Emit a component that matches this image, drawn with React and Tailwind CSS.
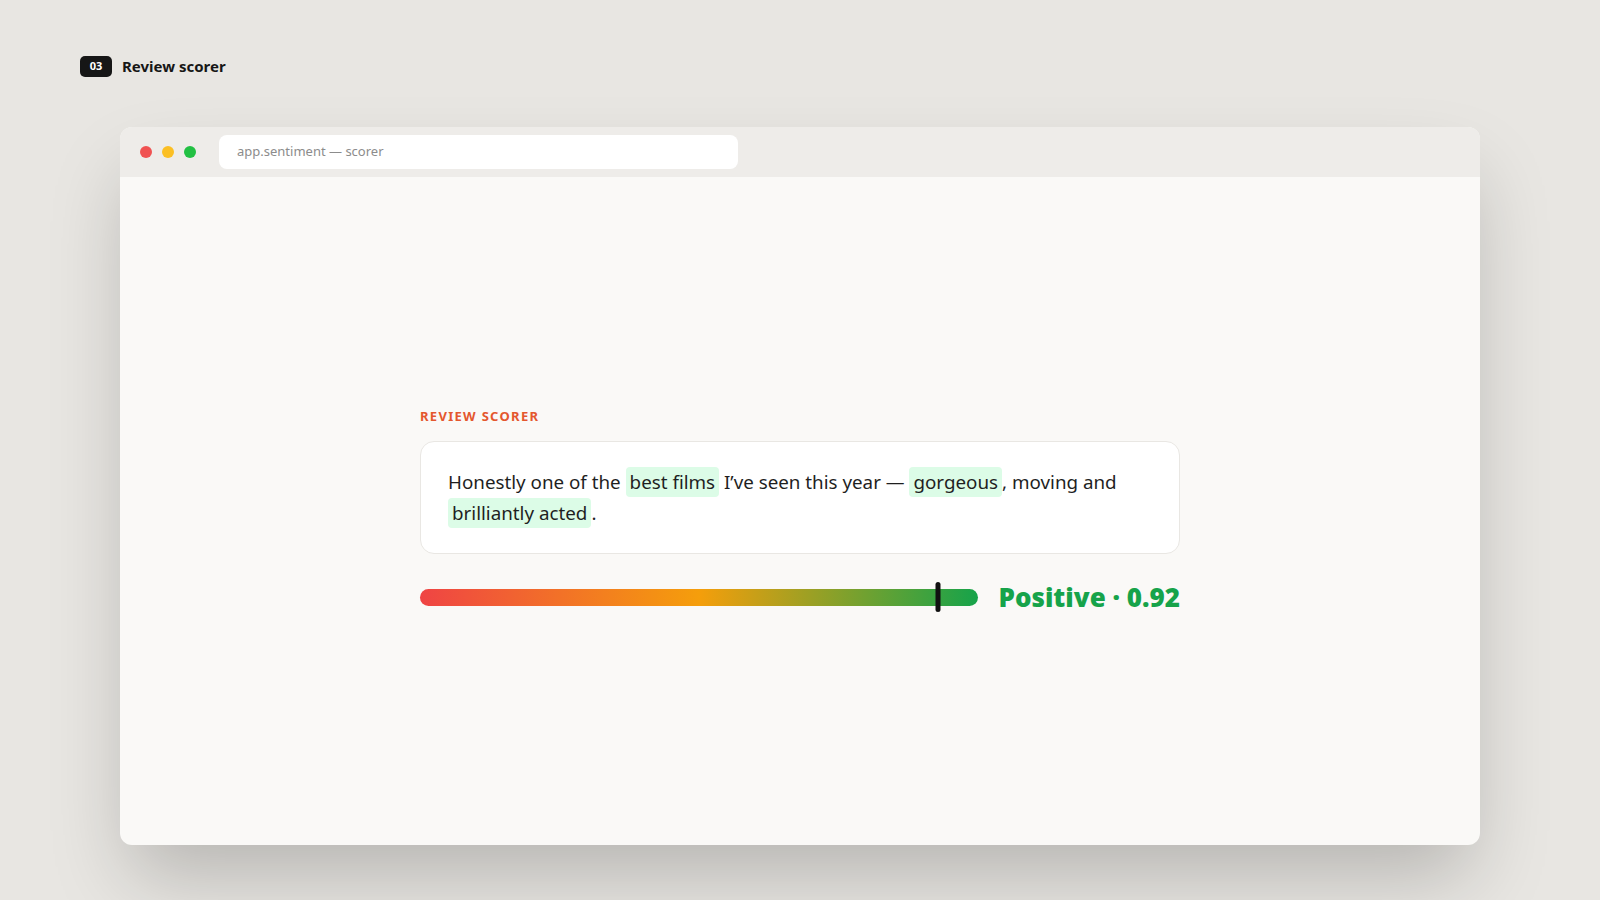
function Mark({ children }) {
  return <span className="rounded-[4px] bg-[#dcfce7] px-[4px] py-[2px]">{children}</span>;
}

export default function App() {
  return (
    <div
      className="flex min-h-[900px] w-full flex-col bg-[#e8e6e2] text-[#1c1c1c]"
      style={{ fontFamily: '"Noto Sans", "Open Sans", sans-serif' }}
    >
      <div className="flex items-center gap-[10px] px-[80px] pt-[55px]">
        <span className="flex h-[21px] w-[32px] items-center justify-center rounded-[5px] bg-[#161616] text-[11px] font-bold text-white">
          03
        </span>
        <span className="text-[15px] font-bold text-[#161616]">Review scorer</span>
      </div>

      <div className="mx-[120px] mt-[49px] flex h-[718px] flex-col overflow-hidden rounded-[12px] bg-[#faf9f7] shadow-[0_40px_80px_-10px_rgba(0,0,0,0.22)]">
        <div className="flex h-[50px] shrink-0 items-center bg-[#eeece9] pl-[20px]">
          <div className="flex gap-[10px]">
            <span className="h-[12px] w-[12px] rounded-full bg-[#f05252]" />
            <span className="h-[12px] w-[12px] rounded-full bg-[#fbbf24]" />
            <span className="h-[12px] w-[12px] rounded-full bg-[#22c043]" />
          </div>
          <div className="ml-[23px] flex h-[34px] w-[519px] items-center rounded-[8px] bg-white pl-[18px] text-[13px] text-[#8c8c8c]">
            app.sentiment — scorer
          </div>
        </div>

        <div className="flex flex-1 items-center justify-center">
          <div className="w-[760px]">
            <div className="mb-[15px] text-[13px] font-bold tracking-[0.1em] text-[#e4572e]">
              REVIEW SCORER
            </div>
            <div className="rounded-[14px] border border-[#e9e7e3] bg-white px-[27px] py-[25px] text-[18.8px] leading-[30.5px] text-[#1f1f1f]">
              Honestly one of the <Mark>best films</Mark> I’ve seen this year — <Mark>gorgeous</Mark>, moving and{' '}
              <Mark>brilliantly acted</Mark>.
            </div>
            <div className="mt-[26px] flex items-center gap-[20px]">
              <div className="relative h-[17px] flex-1 rounded-full bg-[linear-gradient(90deg,#ef4444_0%,#f59e0b_50%,#16a34a_100%)]">
                <span className="absolute left-[92.8%] top-1/2 h-[30px] w-[5px] -translate-x-1/2 -translate-y-1/2 rounded-full bg-[#111]" />
              </div>
              <span className="text-[26px] font-black leading-[34px] text-[#16a34a]">Positive · 0.92</span>
            </div>
          </div>
        </div>
      </div>
    </div>
  );
}
